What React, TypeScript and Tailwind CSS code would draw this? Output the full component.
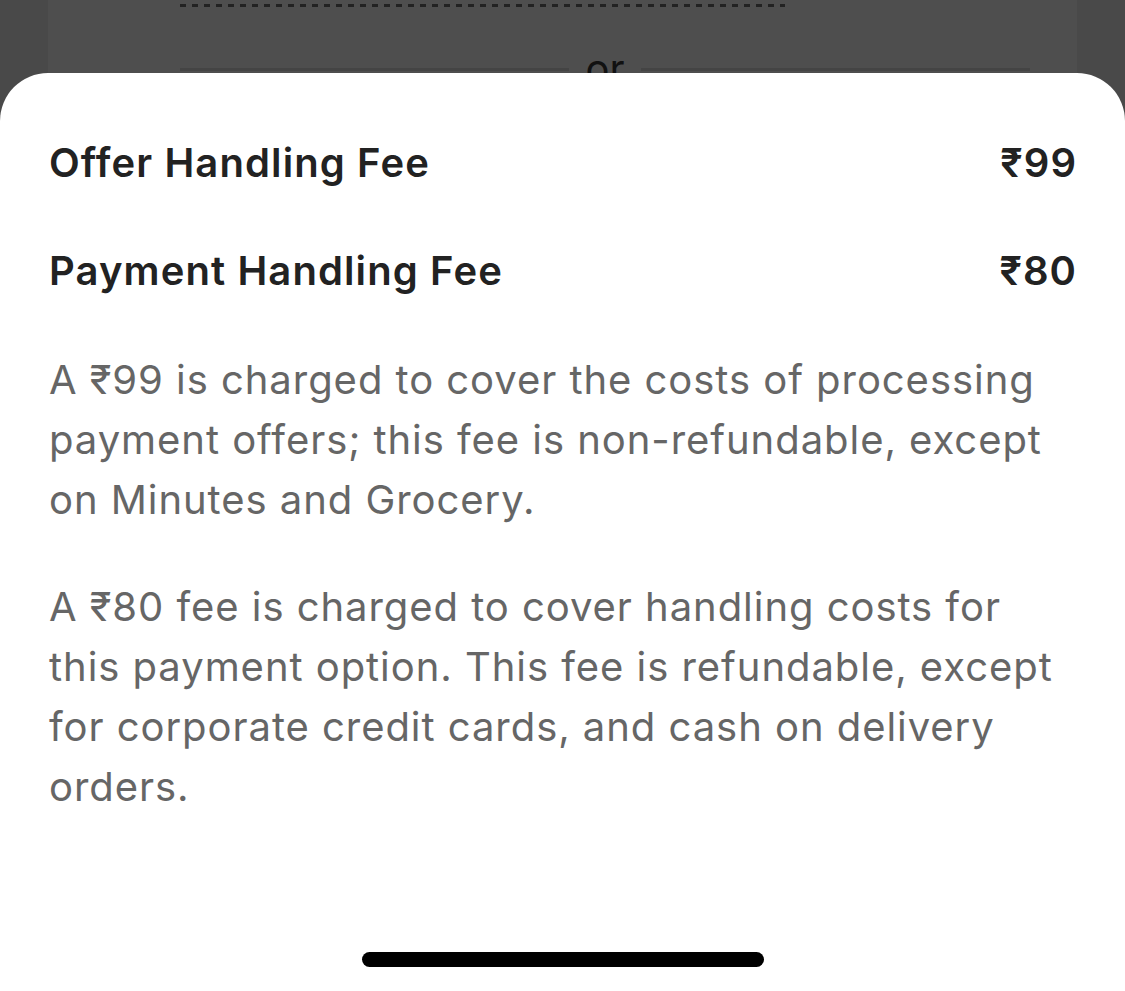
import React from 'react'

const fees = [
  { label: 'Offer Handling Fee', amount: '₹99' },
  { label: 'Payment Handling Fee', amount: '₹80' },
]

const notes = [
  'A ₹99 is charged to cover the costs of processing payment offers; this fee is non-refundable, except on Minutes and Grocery.',
  'A ₹80 fee is charged to cover handling costs for this payment option. This fee is refundable, except for corporate credit cards, and cash on delivery orders.',
]

export default function App() {
  return (
    <div
      className="relative w-[1125px] h-[991px] overflow-hidden bg-[#494949]"
      style={{ fontFamily: 'Inter, "Noto Sans", sans-serif' }}
    >
      {/* dimmed page behind the sheet */}
      <div className="mx-[48px] h-full bg-[#4e4e4e] pl-[132px] pr-[47px] pt-[4px]">
        <div className="w-[605px] h-[3px] bg-[repeating-linear-gradient(90deg,#222222_0_6px,transparent_6px_12px)]" />
        <div className="mt-[42px] flex items-center gap-[16px]">
          <div className="flex-1 h-[3px] bg-[#444444]" />
          <span className="text-[40px] leading-none text-[#111111]">or</span>
          <div className="flex-1 h-[3px] bg-[#444444]" />
        </div>
      </div>

      {/* bottom sheet */}
      <div className="absolute left-0 right-0 top-[73px] bottom-0 rounded-t-[48px] bg-white pl-[49px] pr-[50px] pt-[66px]">
        <div className="flex flex-col gap-[60px]">
          {fees.map((f) => (
            <div key={f.label} className="flex items-center justify-between h-[48px]">
              <span className="text-[40px] font-semibold text-[#222222] tracking-[1.1px]">{f.label}</span>
              <span className="text-[40px] font-semibold text-[#222222] tracking-[1px] -mr-[2px]">{f.amount}</span>
            </div>
          ))}
        </div>

        <div className="mt-[55px] flex flex-col gap-[47px]">
          {notes.map((n) => (
            <p key={n} className="text-[40px] leading-[60px] text-[#666666] tracking-[0.95px]">
              {n}
            </p>
          ))}
        </div>

        <div className="absolute left-[362px] top-[879px] w-[402px] h-[15px] rounded-full bg-black" />
      </div>
    </div>
  )
}
